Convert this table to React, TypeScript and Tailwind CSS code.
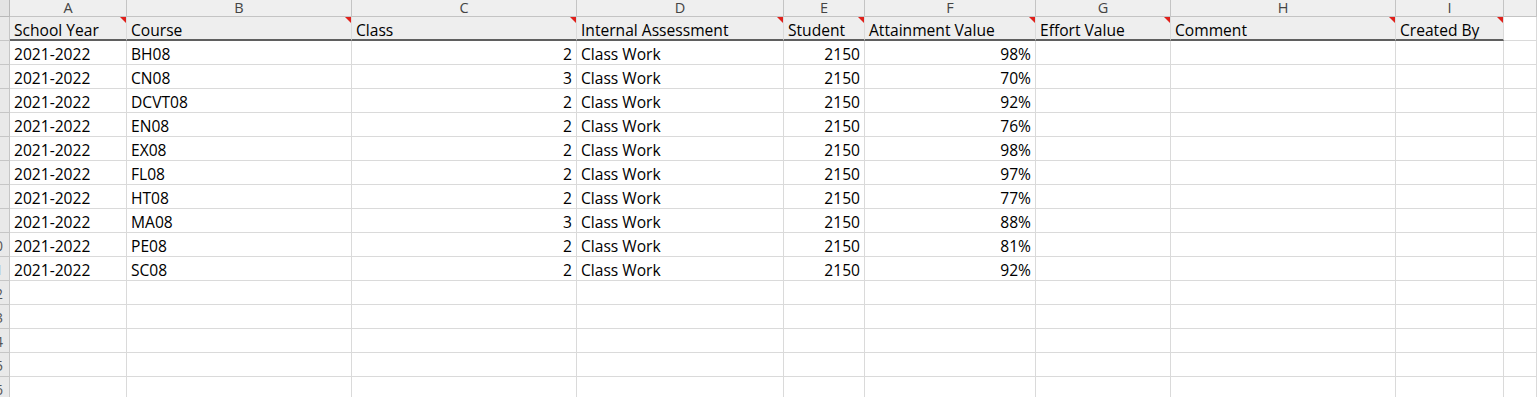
const letters = ['A', 'B', 'C', 'D', 'E', 'F', 'G', 'H', 'I', ''];

const headers = [
  'School Year',
  'Course',
  'Class',
  'Internal Assessment',
  'Student',
  'Attainment Value',
  'Effort Value',
  'Comment',
  'Created By',
];

const rows = [
  ['BH08', '2', '98%'],
  ['CN08', '3', '70%'],
  ['DCVT08', '2', '92%'],
  ['EN08', '2', '76%'],
  ['EX08', '2', '98%'],
  ['FL08', '2', '97%'],
  ['HT08', '2', '77%'],
  ['MA08', '3', '88%'],
  ['PE08', '2', '81%'],
  ['SC08', '2', '92%'],
];

const cols = 'grid-cols-[10px_117px_225px_225px_207px_81px_171px_135px_225px_108px_1fr]';

// row numbers are centred in a header that is scrolled mostly out of view
function RowHead({ n }: { n: number }) {
  return (
    <div className="relative h-6 overflow-hidden border-r border-b border-[#c6c6c6] bg-[#e9e9e9] text-[14px] leading-[22px] text-[#555]">
      <span className="absolute left-[-16px] top-[2px] w-[22px] text-center">{n}</span>
    </div>
  );
}

function Cell({ children, right }: { children?: React.ReactNode; right?: boolean }) {
  return (
    <div
      className={`h-6 overflow-hidden whitespace-nowrap border-r border-b border-[#dadada] bg-white px-[4px] pt-[2px] leading-[22px] ${
        right ? 'text-right' : ''
      }`}
    >
      {children}
    </div>
  );
}

export default function App() {
  return (
    <main
      className="h-[397px] w-[1537px] overflow-hidden bg-white text-[15.6px] text-black"
      style={{ fontFamily: '"Open Sans", "Noto Sans", sans-serif' }}
    >
      {/* Column letters */}
      <div className={`grid ${cols} h-[17px]`}>
        <div className="border-r border-b border-[#b9b9b9] bg-[#e4e4e4]" />
        {letters.map((l, i) => (
          <div
            key={i}
            className="border-r border-b border-[#c4c4c4] bg-[#efefef] text-center text-[14.5px] leading-[16px] text-[#444]"
          >
            {l}
          </div>
        ))}
      </div>

      {/* Header row */}
      <div className={`grid ${cols} h-6`}>
        <RowHead n={1} />
        {headers.map((h) => (
          <div
            key={h}
            className="relative h-6 overflow-hidden whitespace-nowrap border-r border-b-2 border-r-[#dadada] border-b-[#5f5f5f] bg-[#eeeeee] px-[4px] pt-[3px] leading-[20px]"
          >
            {h}
            <span className="absolute right-0 top-0 h-0 w-0 border-l-[6px] border-t-[6px] border-l-transparent border-t-[#e0201b]" />
          </div>
        ))}
        <Cell />
      </div>

      {/* Data rows */}
      {rows.map(([course, cls, val], i) => (
        <div key={course} className={`grid ${cols}`}>
          <RowHead n={i + 2} />
          <Cell>2021-2022</Cell>
          <Cell>{course}</Cell>
          <Cell right>{cls}</Cell>
          <Cell>Class Work</Cell>
          <Cell right>2150</Cell>
          <Cell right>{val}</Cell>
          <Cell />
          <Cell />
          <Cell />
          <Cell />
        </div>
      ))}

      {/* Empty rows */}
      {[12, 13, 14, 15, 16].map((n) => (
        <div key={n} className={`grid ${cols}`}>
          <RowHead n={n} />
          {Array.from({ length: 10 }).map((_, j) => (
            <Cell key={j} />
          ))}
        </div>
      ))}
    </main>
  );
}
